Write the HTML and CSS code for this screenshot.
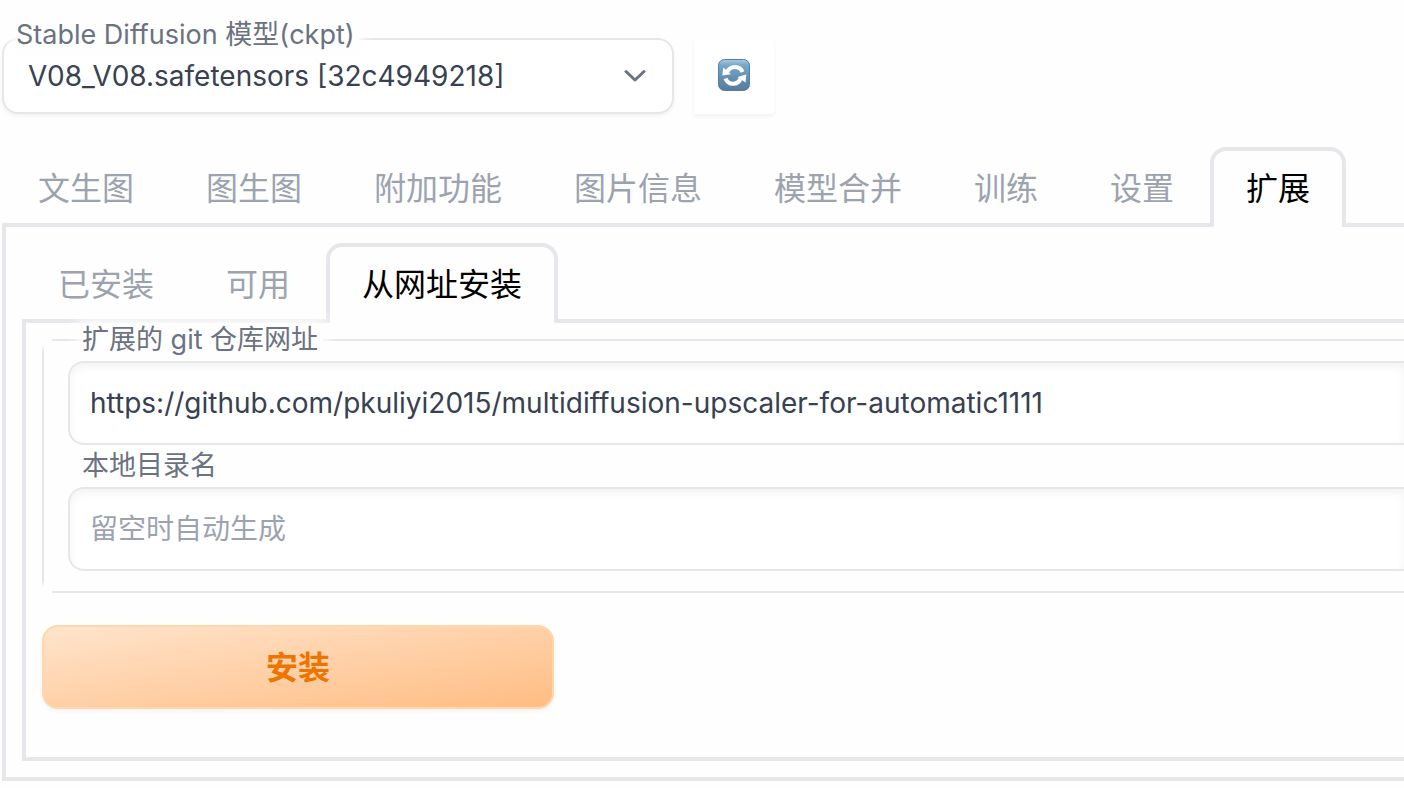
FILE: index.html
```html
<!DOCTYPE html>
<html lang="zh-CN">
<head>
    <meta charset="UTF-8">
    <meta name="viewport" content="width=device-width, initial-scale=1.0">
    <title>Stable Diffusion</title>
    <link rel="stylesheet" href="styles.css">
</head>
<body>
    <div class="container">
        <!-- Model picker -->
        <div class="quicksettings">
            <div class="model">
                <label class="label model-label" for="checkpoint">Stable Diffusion 模型(ckpt)</label>
                <select id="checkpoint" class="model-select">
                    <option>V08_V08.safetensors [32c4949218]</option>
                </select>
                <svg class="chevron" viewBox="0 0 22 14" aria-hidden="true">
                    <path d="M2 2.500L11 11L20 2.500" />
                </svg>
            </div>
            <button class="refresh-btn" type="button" aria-label="Refresh">
                <svg class="refresh-icon" viewBox="0 0 32 32" aria-hidden="true">
                    <defs>
                        <linearGradient id="tile" x1="0" y1="0" x2="0" y2="1">
                            <stop offset="0" stop-color="#a9cbe3" />
                            <stop offset="0.180" stop-color="#78a7c9" />
                            <stop offset="0.600" stop-color="#628fb3" />
                            <stop offset="1" stop-color="#557c9c" />
                        </linearGradient>
                    </defs>
                    <rect x="0.500" y="0.500" width="31" height="31" rx="6" fill="url(#tile)" stroke="#557f9f" />
                    <path class="arc" d="M9 13.500C10.500 9.500 14 8 17 8C20.500 8 23.300 10 24.500 13" />
                    <path class="arc" d="M23 18.500C21.500 23 18 24.800 15 24.800C11.500 24.800 8.700 22.500 7.500 19.500" />
                    <path class="head" d="M5.300 8.500L4.300 16.500L13 15.200Z" />
                    <path class="head" d="M27.500 23.500L28.300 15.500L19.500 18Z" />
                </svg>
            </button>
        </div>

        <!-- Main tabs -->
        <div class="tabs">
            <button class="tab" type="button">文生图</button>
            <button class="tab" type="button">图生图</button>
            <button class="tab" type="button">附加功能</button>
            <button class="tab" type="button">图片信息</button>
            <button class="tab" type="button">模型合并</button>
            <button class="tab" type="button">训练</button>
            <button class="tab" type="button">设置</button>
            <button class="tab active" type="button">扩展</button>
        </div>

        <div class="panel">
            <!-- Extension tabs -->
            <div class="tabs">
                <button class="tab" type="button">已安装</button>
                <button class="tab" type="button">可用</button>
                <button class="tab active" type="button">从网址安装</button>
            </div>

            <form class="panel install-panel">
                <div class="form-group">
                    <div class="field">
                        <label class="label" for="repoUrl">扩展的 git 仓库网址</label>
                        <input type="text" id="repoUrl" value="https://github.com/pkuliyi2015/multidiffusion-upscaler-for-automatic1111">
                    </div>
                    <div class="field">
                        <label class="label" for="dirName">本地目录名</label>
                        <input type="text" id="dirName" placeholder="留空时自动生成">
                    </div>
                </div>
                <button class="install-btn" type="button">安装</button>
            </form>
        </div>
    </div>
</body>
</html>
```
FILE: styles.css
```css
* {
    box-sizing: border-box;
}

body {
    margin: 0;
    background-color: #fefefe;
    color: #374151;
    font-family: Inter, "Noto Sans CJK SC", sans-serif;
    font-size: 28px;
}

button, input, select {
    font: inherit;
}

.container {
    padding: 38px 0 6px 2px;
}

.quicksettings {
    display: flex;
    gap: 20px;
    margin-bottom: 33px;
}

.label {
    width: max-content;
    padding: 0 4px 4px 0;
    color: #6b7280;
    font-size: 27px;
    line-height: 34px;
    background-color: #fefefe;
    box-shadow: 0 0 12px 4px #fefefe;
}

.model {
    position: relative;
    width: 672px;
}

.model-label {
    position: absolute;
    top: -20px;
    left: 14px;
    padding-bottom: 0;
}

.model-select {
    display: block;
    width: 100%;
    height: 76px;
    padding: 0 60px 0 24px;
    border: 2px solid #e5e7eb;
    border-radius: 16px;
    background-color: #fff;
    box-shadow: 0 2px 4px rgba(0, 0, 0, 0.05);
    color: #374151;
    appearance: none;
}

.chevron {
    position: absolute;
    top: 31px;
    right: 28px;
    width: 22px;
    height: 14px;
    fill: none;
    stroke: #6b7280;
    stroke-width: 3;
    stroke-linecap: round;
    stroke-linejoin: round;
    pointer-events: none;
}

.refresh-btn {
    display: flex;
    align-items: center;
    justify-content: center;
    width: 80px;
    height: 76px;
    padding: 0 0 2px;
    border: none;
    background-color: #fff;
    box-shadow: 0 2px 4px rgba(0, 0, 0, 0.05);
    cursor: pointer;
}

.refresh-icon {
    width: 32px;
    height: 32px;
}

.arc {
    fill: none;
    stroke: #fff;
    stroke-width: 4;
}

.head {
    fill: #fff;
}

/* Tabs */
.tabs {
    display: flex;
    position: relative;
    margin-bottom: -4px;
}

.tab {
    height: 80px;
    padding: 0 32px 6px;
    border: 4px solid transparent;
    border-bottom: none;
    border-radius: 16px 16px 0 0;
    background: none;
    color: #9ca3af;
    font-size: 32px;
    white-space: nowrap;
    cursor: pointer;
}

.tab.active {
    border-color: #e5e7eb;
    background-color: #fefefe;
    color: #000;
}

/* panels and inputs stay open on the right */
.panel {
    padding: 16px 0 16px 16px;
    border: 4px solid #e5e7eb;
    border-right: none;
}

/* group outline with open corners */
.form-group {
    position: relative;
    z-index: 1;
    padding: 0 0 22px 26px;
    background:
        linear-gradient(#e5e7eb, #e5e7eb) 10px 16px / 100% 2px no-repeat,
        linear-gradient(#e5e7eb, #e5e7eb) 10px 100% / 100% 2px no-repeat,
        linear-gradient(transparent 22px, #e5e7eb 28px, #e5e7eb calc(100% - 12px), transparent calc(100% - 6px)) 0 0 / 2px 100% no-repeat;
}

.install-panel {
    padding-top: 0;
    padding-bottom: 48px;
}

.field .label {
    display: block;
    margin-left: 14px;
}

.field input {
    display: block;
    position: relative;
    width: 100%;
    height: 84px;
    padding: 0 20px;
    border: 2px solid #e5e7eb;
    border-right: none;
    border-radius: 16px 0 0 16px;
    background-color: #fff;
    box-shadow: inset 0 4px 8px rgba(0, 0, 0, 0.05);
    color: #374151;
}

.field + .field .label {
    padding-top: 4px;
    box-shadow: none;
}

.field input::placeholder {
    color: #9ca3af;
    opacity: 1;
}

.install-btn {
    display: block;
    width: 512px;
    height: 84px;
    margin-top: 32px;
    padding-bottom: 6px;
    border: 2px solid #fed7aa;
    border-radius: 16px;
    background: linear-gradient(to bottom right, #ffe4cc, #ffbd83);
    box-shadow: 0 2px 4px rgba(0, 0, 0, 0.05);
    color: #ee7400;
    font-size: 32px;
    font-weight: 600;
    cursor: pointer;
}
```
